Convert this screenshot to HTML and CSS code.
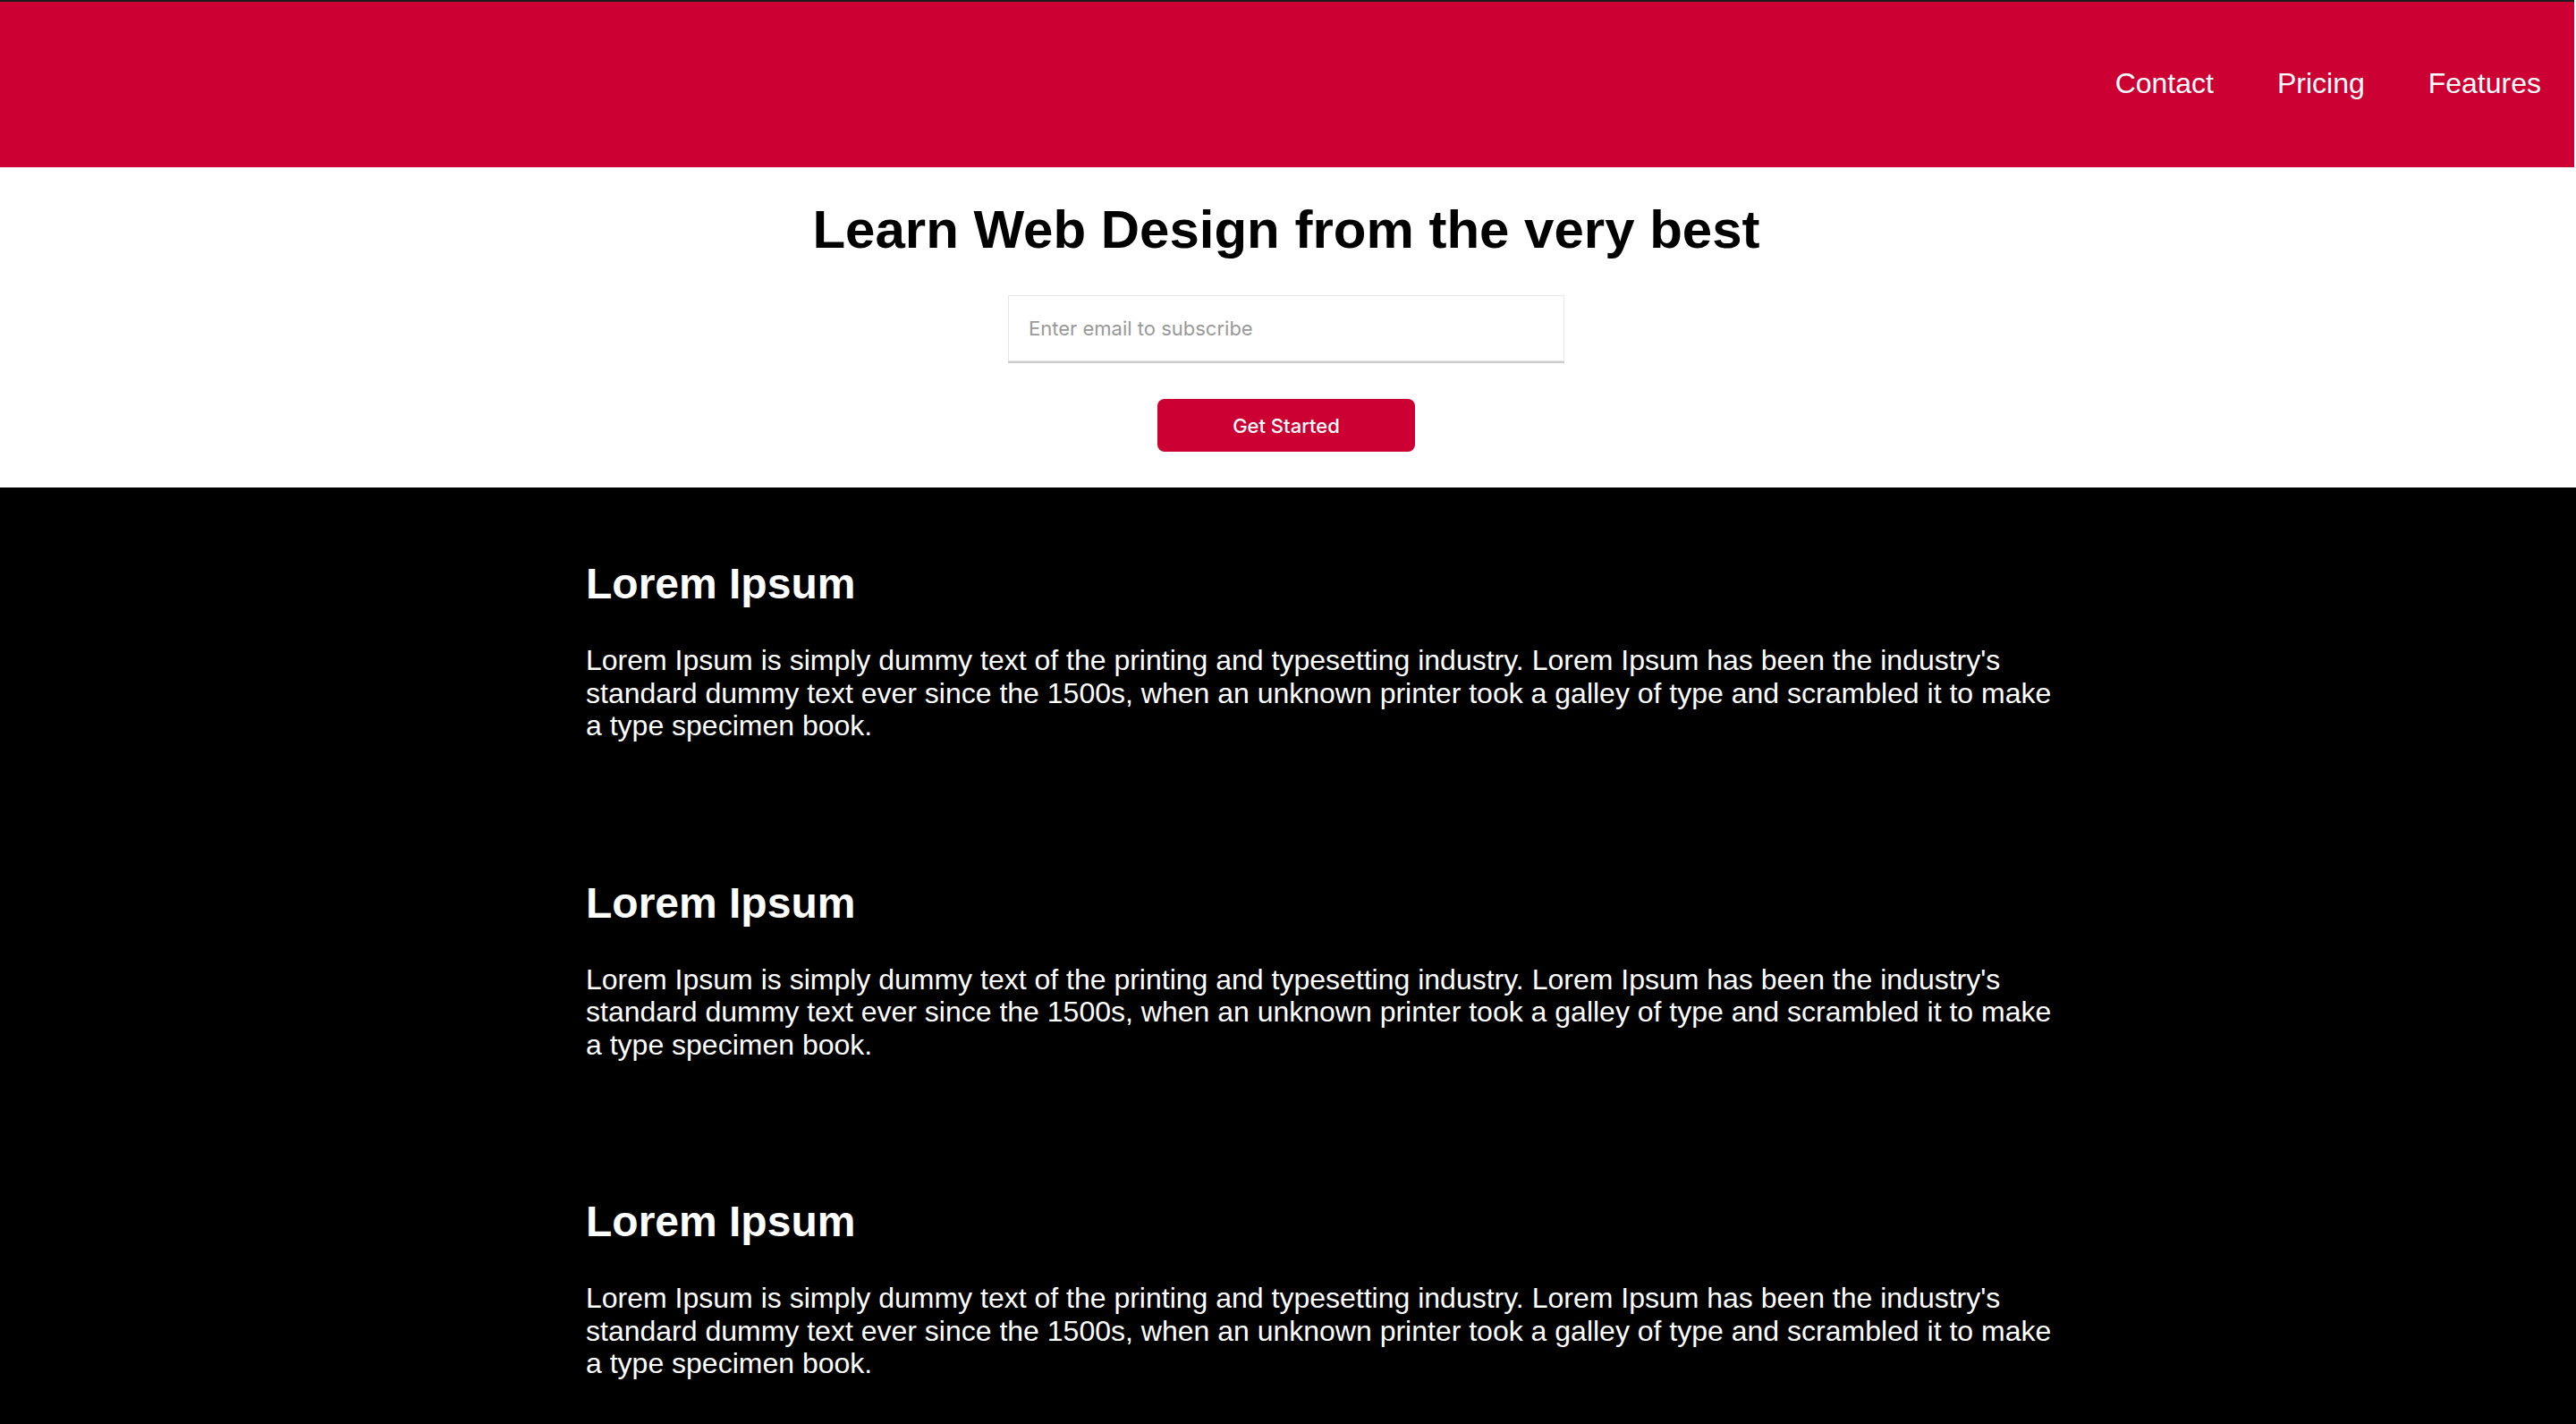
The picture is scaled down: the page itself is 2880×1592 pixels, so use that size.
FILE: index.html
```html
<!DOCTYPE html>
<html lang="en">
<head>
<meta charset="utf-8">
<title>Learn Web Design</title>
<link rel="stylesheet" href="styles.css">
</head>
<body>
<header class="site-header">
  <nav class="nav">
    <a class="nav-link" href="#">Contact</a>
    <a class="nav-link" href="#">Pricing</a>
    <a class="nav-link" href="#">Features</a>
  </nav>
</header>
<section class="hero">
  <h1 class="hero-title">Learn Web Design from the very best</h1>
  <input class="email-input" type="email" placeholder="Enter email to subscribe">
  <button class="cta" type="button">Get Started</button>
</section>
<main class="content">
  <div class="content-inner">
    <article class="block">
      <h2 class="block-title">Lorem Ipsum</h2>
      <p class="block-text">Lorem Ipsum is simply dummy text of the printing and typesetting industry. Lorem Ipsum has been the industry's standard dummy text ever since the 1500s, when an unknown printer took a galley of type and scrambled it to make a type specimen book.</p>
    </article>
    <article class="block">
      <h2 class="block-title">Lorem Ipsum</h2>
      <p class="block-text">Lorem Ipsum is simply dummy text of the printing and typesetting industry. Lorem Ipsum has been the industry's standard dummy text ever since the 1500s, when an unknown printer took a galley of type and scrambled it to make a type specimen book.</p>
    </article>
    <article class="block">
      <h2 class="block-title">Lorem Ipsum</h2>
      <p class="block-text">Lorem Ipsum is simply dummy text of the printing and typesetting industry. Lorem Ipsum has been the industry's standard dummy text ever since the 1500s, when an unknown printer took a galley of type and scrambled it to make a type specimen book.</p>
    </article>
  </div>
</main>
</body>
</html>
```

FILE: styles.css
```css
html {
  background: #ffffff;
}

body {
  margin: 0;
  font-family: "Liberation Sans", Arial, Helvetica, sans-serif;
  color: #000000;
}

.site-header {
  height: 185px;
  border-top: 2px solid #1c1c1c;
  margin-right: 2px;
  background: #cc0033;
  display: flex;
  justify-content: flex-end;
  align-items: center;
}

.nav {
  display: flex;
  gap: 71px;
  padding-right: 37px;
  padding-bottom: 3px;
}

.nav-link {
  color: #ffffff;
  text-decoration: none;
  font-size: 32px;
  line-height: 37px;
}

.hero {
  background: #ffffff;
  display: flex;
  flex-direction: column;
  align-items: center;
  padding: 35px 4px 40px 0;
}

.hero-title {
  margin: 0;
  font-size: 60px;
  font-weight: 700;
  line-height: 69px;
}

.email-input {
  margin-top: 39px;
  width: 622px;
  height: 74px;
  box-sizing: border-box;
  border: 1px solid #e6e6e6;
  box-shadow: 0 2px 0 #cccccc;
  padding: 0 24px 0 22px;
  font-family: Inter, "Noto Sans", sans-serif;
  font-size: 22px;
  color: #333333;
  background: #ffffff;
  outline: none;
}

.email-input::placeholder {
  color: #999999;
}

.cta {
  margin-top: 42px;
  width: 288px;
  height: 59px;
  border: none;
  border-radius: 8px;
  background: #cc0033;
  color: #ffffff;
  font-family: Inter, "Noto Sans", sans-serif;
  font-size: 22px;
  font-weight: 500;
  cursor: pointer;
}

.content {
  background: #000000;
  color: #ffffff;
}

.content-inner {
  width: 1645px;
  margin-left: 655px;
}

.block {
  padding: 40px 0;
}

.block-title {
  margin: 40px 0;
  font-size: 48px;
  font-weight: 700;
  line-height: 55px;
}

.block-text {
  margin: 40px 0 32px;
  font-size: 32px;
  line-height: 36.5px;
}
```
